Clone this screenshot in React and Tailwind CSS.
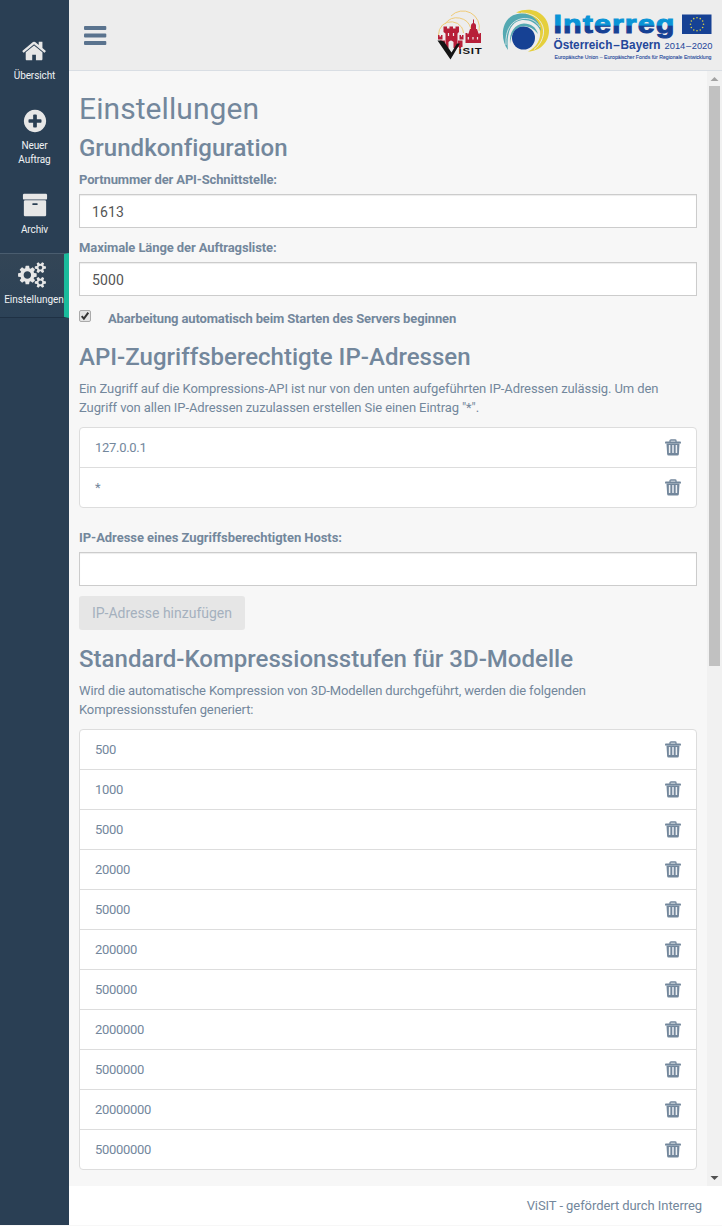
import React from 'react';

const ICONS = {
  home: 'M1408 992v480q0 26-19 45t-45 19h-384v-384h-256v384h-384q-26 0-45-19t-19-45v-480q0-1 .5-3t.5-3l575-474 575 474q1 2 1 6zm223-69l-62 74q-8 9-21 11h-3q-13 0-21-7l-692-577-692 577q-12 8-24 7-13-2-21-11l-62-74q-8-10-7-23.5t11-21.5l719-599q32-26 76-26t76 26l244 204v-195q0-14 9-23t23-9h192q14 0 23 9t9 23v408l219 182q10 8 11 21.5t-7 23.5z',
  plus: 'M1344 960v-128q0-26-19-45t-45-19h-256v-256q0-26-19-45t-45-19h-128q-26 0-45 19t-19 45v256h-256q-26 0-45 19t-19 45v128q0 26 19 45t45 19h256v256q0 26 19 45t45 19h128q26 0 45-19t19-45v-256h256q26 0 45-19t19-45zm320-64q0 209-103 385.5t-279.5 279.5-385.5 103-385.5-103-279.5-279.5-103-385.5 103-385.5 279.5-279.5 385.5-103 385.5 103 279.5 279.5 103 385.5z',
  archive: 'M1088 832q0-26-19-45t-45-19h-256q-26 0-45 19t-19 45 19 45 45 19h256q26 0 45-19t19-45zm576-192v960q0 26-19 45t-45 19h-1408q-26 0-45-19t-19-45v-960q0-26 19-45t45-19h1408q26 0 45 19t19 45zm64-448v256q0 26-19 45t-45 19h-1536q-26 0-45-19t-19-45v-256q0-26 19-45t45-19h1536q26 0 45 19t19 45z',
  cogs: 'M896 896q0-106-75-181t-181-75-181 75-75 181 75 181 181 75 181-75 75-181zm768 512q0-52-38-90t-90-38-90 38-38 90q0 53 37.5 90.5t90.5 37.5 90.5-37.5 37.5-90.5zm0-1024q0-52-38-90t-90-38-90 38-38 90q0 53 37.5 90.5t90.5 37.5 90.5-37.5 37.5-90.5zm-384 421v185q0 10-7 19.5t-16 10.5l-155 24q-11 35-32 76 34 48 90 115 7 11 7 20 0 12-7 19-23 30-82.5 89.5t-78.5 59.5q-11 0-21-7l-115-90q-37 19-77 31-11 108-23 155-7 24-30 24h-186q-11 0-20-7.5t-10-17.5l-23-153q-34-10-75-31l-118 89q-7 7-20 7-11 0-21-8-144-133-144-160 0-9 7-19 10-14 41-53t47-61q-23-44-35-82l-152-24q-10-1-17-9.5t-7-19.5v-185q0-10 7-19.5t16-10.5l155-24q11-35 32-76-34-48-90-115-7-11-7-20 0-12 7-20 22-30 82-89t79-59q11 0 21 7l115 90q34-18 77-32 11-108 23-154 7-24 30-24h186q11 0 20 7.5t10 17.5l23 153q34 10 75 31l118-89q8-7 20-7 11 0 21 8 144 133 144 160 0 8-7 19-12 16-42 54t-45 60q23 48 34 82l152 23q10 2 17 10.5t7 19.5zm640 533v140q0 16-149 31-12 27-30 52 51 113 51 138 0 4-4 7-122 71-124 71-8 0-46-47t-52-68q-20 2-30 2t-30-2q-14 21-52 68t-46 47q-2 0-124-71-4-3-4-7 0-25 51-138-18-25-30-52-149-15-149-31v-140q0-16 149-31 13-29 30-52-51-113-51-138 0-4 4-7 4-2 35-20t59-34 30-16q8 0 46 46.5t52 67.5q20-2 30-2t30 2q51-71 92-112l6-2q4 0 124 70 4 3 4 7 0 25-51 138 17 23 30 52 149 15 149 31zm0-1024v140q0 16-149 31-12 27-30 52 51 113 51 138 0 4-4 7-122 71-124 71-8 0-46-47t-52-68q-20 2-30 2t-30-2q-14 21-52 68t-46 47q-2 0-124-71-4-3-4-7 0-25 51-138-18-25-30-52-149-15-149-31v-140q0-16 149-31 13-29 30-52-51-113-51-138 0-4 4-7 4-2 35-20t59-34 30-16q8 0 46 46.5t52 67.5q20-2 30-2t30 2q51-71 92-112l6-2q4 0 124 70 4 3 4 7 0 25-51 138 17 23 30 52 149 15 149 31z',
};

function NavIcon({ name }) {
  return name === 'cogs' ? (
    <svg className="mr-px h-[26px] w-[28px] fill-[#e7e7e7]" viewBox="0 0 1920 1792"><path d={ICONS.cogs} /></svg>
  ) : (
    <svg className="h-[26px] w-[26px] fill-[#e7e7e7]" viewBox="0 0 1792 1792"><path d={ICONS[name]} /></svg>
  );
}

function NavItem({ icon, active, children }) {
  return (
    <li
      className={
        active
          ? 'flex h-[65px] flex-col items-center border-y border-t-[#4a5d6f] border-b-[#1f3144] border-r-[5px] border-r-[#1abb9c] bg-linear-to-b from-[#334556] to-[#2c4257] pt-2'
          : 'flex flex-col items-center pt-[9px] pb-4'
      }
    >
      <NavIcon name={icon} />
      <span className={active ? 'mt-[5px] pl-1 text-[10px] leading-[14px] text-[#f0f2f4]' : 'mt-[5px] text-center text-[10px] leading-[14px] tracking-[-0.1px] whitespace-pre text-[#f0f2f4]'}>{children}</span>
    </li>
  );
}

function TrashIcon() {
  return (
    <svg className="mb-px h-[17px] w-4" viewBox="0 0 16 17">
      <path d="M5 3V1.800Q5 1 6 1h4q1 0 1 .8V3" fill="none" stroke="#73879c" strokeWidth="1.300" />
      <path d="M.8 2.500h14.400q.8 0 .8.8v1.200H0V3.300q0-.8.8-.8z" fill="#73879c" />
      <path d="M1.500 4.500h13l-.6 10.500q-.1 1.500-1.500 1.500H3.600q-1.400 0-1.500-1.500z" fill="#73879c" />
      <path d="M4.600 6v8M8 6v8M11.400 6v8" stroke="#edf0f3" strokeWidth="1.500" />
    </svg>
  );
}

function ValueList({ values }) {
  return (
    <ul className="divide-y divide-[#ddd] rounded border border-[#ddd] bg-white">
      {values.map((v, i) => (
        <li key={v} className={i === values.length - 1 ? 'flex h-[39px] items-center justify-between px-[15px]' : 'flex h-[40px] items-center justify-between px-[15px]'}>
          <span className="tracking-[-0.3px]">{v}</span>
          <TrashIcon />
        </li>
      ))}
    </ul>
  );
}

function Field({ label, value, spacing = 'tracking-[-0.1px]' }) {
  return (
    <label className="block">
      <span className={`mb-[5px] block font-bold ${spacing}`}>{label}</span>
      <input
        type="text"
        defaultValue={value}
        className="block h-[34px] w-full border border-[#ccc] bg-white px-3 pt-0.5 text-sm tracking-[0.15px] text-[#555] shadow-[inset_0_1px_1px_rgba(0,0,0,0.075)] outline-none"
      />
    </label>
  );
}

function VisitLogo() {
  return (
    <svg className="h-[52px] w-[48px] shrink-0" viewBox="436 9 48 52">
      <g fill="none" stroke="#efcb78" strokeWidth="1">
        <path d="M438.500 35a14 14 0 0 1 4-10a13 13 0 0 1 19 2a14 14 0 0 1 2 6" />
        <path d="M445 24a14.500 14.500 0 0 1 26 5" />
        <path d="M451 16a16.500 16.500 0 0 1 28 15" />
      </g>
      <g fill="#b71f38">
        <path d="M443.500 26.500h3.500v2h2.500v-2h3.500v2h2.500v-2h3.500v5.500l-1.500 1.500V48h-4v-6q-2.500-3-5 0v6h-3V33.500l-2-1.500z" />
        <path d="M438 35h1.500v1.500h1.500V35h1.500v4.500H438zM459.500 35h1.500v1.500h1V35h1.500v4.500h-4zM440 40.500h5V47h-2zM458 40.500h4.500V47H458z" />
        <path d="M465.500 33h2v1.500l1-1 1.500-4.500h1v-3.500q0-2 2-2.500V19.500h1V23q2 .5 2 2.500V29h1l1.500 4.500 1 1V33h1.500v10h-15.500z" />
      </g>
      <path d="M448.500 33v3M453.500 33v3M468.300 37v2.500M473 37v2.500M477.500 37v2.500" stroke="#ededed" strokeWidth="1.200" />
      <path d="M437.500 40.500h3.500l3 1 7.500 11 5.500-9h3l-9.500 16z" fill="#151515" />
      <text x="458.500" y="54" textLength="24" lengthAdjust="spacingAndGlyphs" fontFamily="Liberation Sans" fontWeight="700" fontSize="9" letterSpacing="0.6" fill="#151515">iSIT</text>
      <rect x="459" y="47" width="2" height="1.800" fill="#b71f38" />
    </svg>
  );
}

function InterregLogo() {
  const stars = Array.from({ length: 12 }, (_, i) => {
    const a = (i * Math.PI) / 6;
    return [697 + 6.5 * Math.sin(a), 24.300 - 6.500 * Math.cos(a)];
  });
  return (
    <svg className="h-[54px] w-[214px] shrink-0" viewBox="502 8 214 54">
      <defs>
        <linearGradient id="interreg" gradientUnits="userSpaceOnUse" x1="0" y1="13" x2="0" y2="37">
          <stop offset="0.50" stopColor="#0a94d6" />
          <stop offset="0.56" stopColor="#164194" />
        </linearGradient>
      </defs>
      <path d="M516 12.500C520 10.500 524 9.800 528 9.800C540 9.800 549 19 549 30.500C549 42 540 51.500 528 51.500C537 47 541 39 540 31C538 20 528 13 516 12.500z" fill="#e5cf3c" />
      <path d="M521 13C535 13 542.500 21 543.500 30C544 38 540 45 534 49.500" fill="none" stroke="#ededed" strokeWidth="0.900" />
      <path d="M508 50C498.500 37 502 15 520 13.500C532 12.500 540 21 541 31C536 22 529 19.500 522 20C511 21.500 506 33 508 50z" fill="#54a9b2" />
      <path d="M506 45C505 29 512 20 523 18.500C531 18 536 21 540 27" fill="none" stroke="#ededed" strokeWidth="0.800" />
      <path d="M510 44C509 32 515 24 524 23.500C531 23.500 536 27 538 34C534 28.500 529 26.200 523.500 26.200C516 27 511 33 510 44z" fill="#54a9b2" />
      <circle cx="523.500" cy="38" r="11.500" fill="#164194" />
      <text x="553.500" y="33" textLength="122" lengthAdjust="spacingAndGlyphs" fontFamily="Liberation Sans" fontWeight="700" fontSize="26" letterSpacing="0.9" fill="url(#interreg)" stroke="url(#interreg)" strokeWidth="1">Interreg</text>
      <rect x="682" y="14.500" width="29.500" height="19.500" fill="#164194" />
      {stars.map(([x, y]) => <circle key={`${x}-${y}`} cx={x} cy={y} r="0.8" fill="#d8cf45" />)}
      <g fontFamily="Liberation Sans" fill="#24479a">
        <text x="553.500" y="49" textLength="107" lengthAdjust="spacingAndGlyphs" fontWeight="700" fontSize="12.300" wordSpacing="-2.500">Österreich – Bayern</text>
        <text x="664.500" y="49" textLength="48" lengthAdjust="spacingAndGlyphs" fontSize="9.600" wordSpacing="-2">2014 – 2020</text>
        <text x="554.500" y="59" textLength="157" lengthAdjust="spacingAndGlyphs" fontSize="5.200" stroke="#24479a" strokeWidth="0.100">Europäische Union – Europäischer Fonds für Regionale Entwicklung</text>
      </g>
    </svg>
  );
}

function Heading({ children }) {
  return <h2 className="text-2xl leading-[26px] font-medium tracking-[0.02px]">{children}</h2>;
}

export default function App() {
  return (
    <div className="h-[1226px] w-[722px] overflow-hidden bg-[#f7f7f7] font-['Roboto',sans-serif] text-[13px] leading-[19px] text-[#73879c]">
      <div className="flex h-[1225px]">
        <nav className="w-[69px] shrink-0 bg-[#2a3f54] pt-[29px]">
          <ul>
            <NavItem icon="home">Übersicht</NavItem>
            <NavItem icon="plus">{'Neuer\nAuftrag'}</NavItem>
            <NavItem icon="archive">Archiv</NavItem>
            <NavItem icon="cogs" active>Einstellungen</NavItem>
          </ul>
        </nav>
        <div className="flex min-w-0 flex-1 flex-col">
          <header className="flex h-[71px] shrink-0 items-start border-b border-[#d9dee4] bg-[#ededed] pr-1.5">
            <button className="mt-[26px] ml-[15px]" aria-label="Menü">
              <svg className="h-[19px] w-[23px]" viewBox="0 0 23 19" fill="#5a738e">
                <rect width="22.300" height="4" rx="1" />
                <rect y="7.500" width="22.300" height="4" rx="1" />
                <rect y="15" width="22.300" height="4" rx="1" />
              </svg>
            </button>
            <div className="mt-2 ml-auto flex gap-[18px]">
              <div className="pt-px"><VisitLogo /></div>
              <InterregLogo />
            </div>
          </header>
          <div className="flex min-h-0 flex-1">
            <main className="min-w-0 flex-1 px-2.5 pt-[21px]">
              <h1 className="mb-2.5 text-[30px] leading-[33px] tracking-[0.08px]">Einstellungen</h1>
              <Heading>Grundkonfiguration</Heading>
              <div className="mt-[9px] flex flex-col gap-2.5">
                <Field label="Portnummer der API-Schnittstelle:" value="1613" spacing="tracking-[-0.15px]" />
                <Field label="Maximale Länge der Auftragsliste:" value="5000" />
              </div>
              <label className="mt-[13px] mb-4 flex h-[19px] items-start font-bold tracking-[-0.14px]">
                <svg className="mt-px mr-[17px] h-3 w-3" viewBox="0 0 12 12">
                  <rect x=".5" y=".5" width="11" height="11" rx="1.500" fill="#e3e3e3" stroke="#aaa" />
                  <path d="M2.700 6.200l2.200 2.500 4.400-6" fill="none" stroke="#333" strokeWidth="2" />
                </svg>
                Abarbeitung automatisch beim Starten des Servers beginnen
              </label>
              <Heading>API-Zugriffsberechtigte IP-Adressen</Heading>
              <p className="mt-[9px] mb-2.5 tracking-[-0.1px]">Ein Zugriff auf die Kompressions-API ist nur von den unten aufgeführten IP-Adressen zulässig. Um den<br />Zugriff von allen IP-Adressen zuzulassen erstellen Sie einen Eintrag "*".</p>
              <ValueList values={['127.0.0.1', '*']} />
              <div className="mt-5">
                <Field label="IP-Adresse eines Zugriffsberechtigten Hosts:" value="" spacing="tracking-[-0.05px]" />
              </div>
              <button className="mt-2.5 mb-4 block h-[34px] w-[166px] rounded-[3px] bg-[#e6e6e6] text-sm text-[#a5b1be]">IP-Adresse hinzufügen</button>
              <Heading>Standard-Kompressionsstufen für 3D-Modelle</Heading>
              <p className="mt-[9px] mb-2.5 tracking-[-0.12px]">Wird die automatische Kompression von 3D-Modellen durchgeführt, werden die folgenden<br />Kompressionsstufen generiert:</p>
              <ValueList values={['500', '1000', '5000', '20000', '50000', '200000', '500000', '2000000', '5000000', '20000000', '50000000']} />
            </main>
            <div className="flex w-[15px] shrink-0 flex-col items-center bg-[#f1f1f1]">
              <svg className="h-[15px] w-[15px] shrink-0" viewBox="0 0 15 15"><path d="M3.500 10L7.500 6l4 4z" fill="#a3a3a3" /></svg>
              <div className="h-[580px] w-[11px] bg-[#c1c1c1]" />
              <svg className="mt-auto h-[15px] w-[15px] shrink-0" viewBox="0 0 15 15"><path d="M3.500 5L7.500 9l4-4z" fill="#505050" /></svg>
            </div>
          </div>
          <footer className="flex h-[39px] shrink-0 items-center justify-end bg-white pr-5 tracking-[-0.07px]">ViSIT - gefördert durch Interreg</footer>
        </div>
      </div>
    </div>
  );
}
